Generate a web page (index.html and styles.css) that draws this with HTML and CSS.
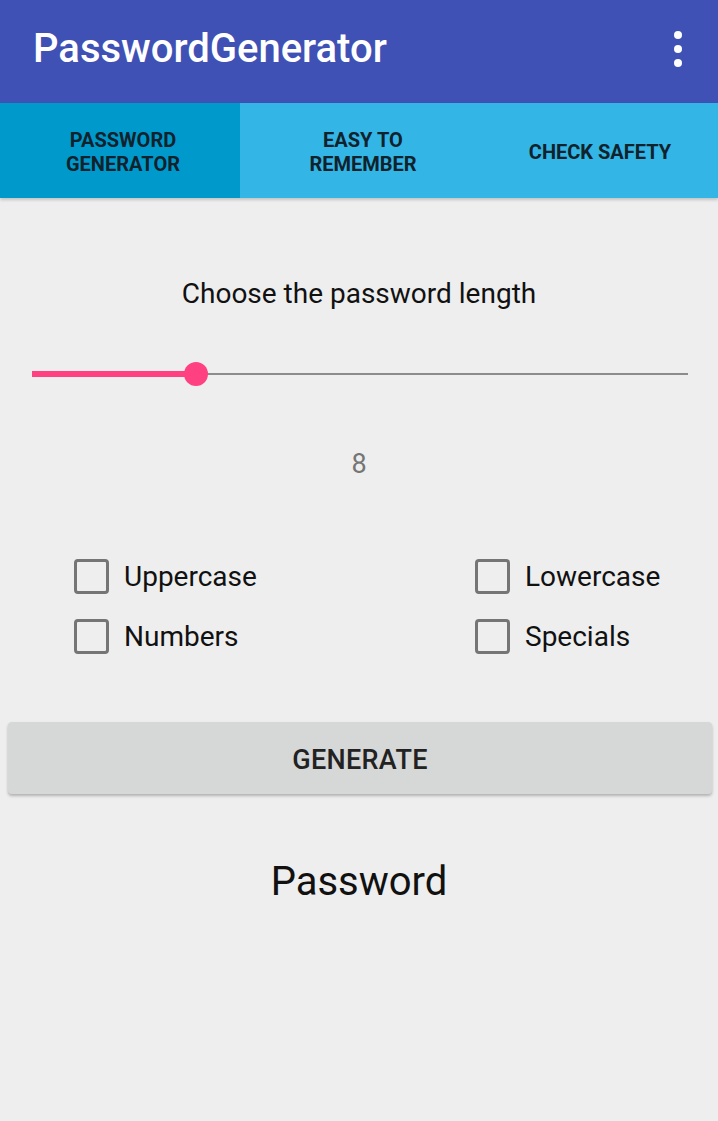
FILE: index.html
```html
<!DOCTYPE html>
<html>
<head>
<meta charset="utf-8">
<link rel="stylesheet" href="styles.css">
</head>
<body>
<div class="app">
  <header class="appbar">
    <h1 class="title">PasswordGenerator</h1>
    <div class="overflow"><span></span><span></span><span></span></div>
  </header>
  <nav class="tabs">
    <div class="tab active">PASSWORD<br>GENERATOR</div>
    <div class="tab">EASY TO<br>REMEMBER</div>
    <div class="tab">CHECK SAFETY</div>
  </nav>
  <main class="content">
    <p class="prompt">Choose the password length</p>
    <div class="slider">
      <div class="track"></div>
      <div class="fill"></div>
      <div class="thumb"></div>
    </div>
    <p class="value">8</p>
    <div class="options">
      <label class="option"><span class="box"></span>Uppercase</label>
      <label class="option"><span class="box"></span>Lowercase</label>
      <label class="option"><span class="box"></span>Numbers</label>
      <label class="option"><span class="box"></span>Specials</label>
    </div>
    <button class="generate">GENERATE</button>
    <p class="password">Password</p>
  </main>
</div>
</body>
</html>
```
FILE: styles.css
```css
* { box-sizing: border-box; }
html, body { margin: 0; padding: 0; }
body {
  background: #eeeeee;
  font-family: Roboto, "Noto Sans", sans-serif;
  width: 718px;
  height: 1121px;
  overflow: hidden;
}
.app { display: flex; flex-direction: column; }
.appbar {
  height: 103px;
  background: #3f51b5;
  display: flex;
  align-items: center;
  justify-content: space-between;
  padding: 0 32px 6px 33px;
}
.title {
  margin: 0;
  color: #ffffff;
  font-size: 40px;
  font-weight: 500;
  letter-spacing: 0;
}
.overflow {
  display: flex;
  flex-direction: column;
  gap: 6px;
  margin-right: 4px;
}
.overflow span {
  width: 8px;
  height: 8px;
  border-radius: 50%;
  background: #fff;
}
.tabs {
  display: grid;
  grid-template-columns: 240px 240px 1fr;
  height: 95px;
  background: #33b5e5;
  box-shadow: 0 2px 3px rgba(0,0,0,0.18);
  position: relative;
  z-index: 1;
}
.tab {
  display: flex;
  align-items: center;
  justify-content: center;
  text-align: center;
  font-size: 20px;
  font-weight: 700;
  line-height: 24px;
  color: #10222c;
  padding-top: 3px;
}
.tab.active { background: #0099cc; }
.tab:first-child { padding-left: 6px; }
.tab:nth-child(2) { padding-left: 6px; }
.tab:nth-child(3) { padding-left: 2px; }
.content {
  display: flex;
  flex-direction: column;
  align-items: stretch;
}
.prompt {
  margin: 78px 0 0;
  text-align: center;
  font-size: 28px;
  line-height: 36px;
  color: #111;
}
.slider {
  position: relative;
  height: 24px;
  margin: 50px 30px 0 32px;
}
.track {
  position: absolute;
  left: 0;
  right: 0;
  top: 11px;
  height: 2px;
  background: #8c8c8c;
}
.fill {
  position: absolute;
  left: 0;
  width: 164px;
  top: 9px;
  height: 6px;
  background: #ff4081;
}
.thumb {
  position: absolute;
  left: 152px;
  top: 0;
  width: 24px;
  height: 24px;
  border-radius: 50%;
  background: #ff4081;
}
.value {
  margin: 62px 0 0;
  text-align: center;
  font-size: 27px;
  line-height: 32px;
  color: #757575;
}
.options {
  display: grid;
  grid-template-columns: 401px 1fr;
  row-gap: 25px;
  margin: 79px 0 0 74px;
}
.option {
  display: flex;
  align-items: center;
  gap: 15px;
  font-size: 28px;
  color: #111;
  height: 35px;
}
.box {
  width: 35px;
  height: 35px;
  border: 3px solid #757575;
  border-radius: 4px;
}
.generate {
  margin: 68px 6px 0 8px;
  height: 72px;
  border: none;
  border-radius: 4px;
  background: #d6d7d7;
  box-shadow: 0 2px 3px rgba(0,0,0,0.25);
  font-family: Roboto, "Noto Sans", sans-serif;
  font-size: 27px;
  font-weight: 500;
  color: #222;
  letter-spacing: 0.3px;
  padding-top: 4px;
}
.password {
  margin: 64px 0 0;
  text-align: center;
  font-size: 40px;
  line-height: 48px;
  color: #111;
}
```
